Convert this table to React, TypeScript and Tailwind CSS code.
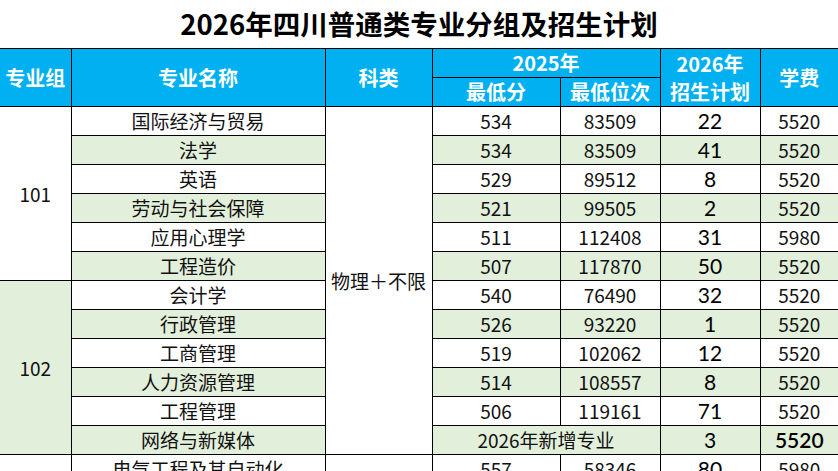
const groups = [
  {
    id: "101",
    bg: "bg-white",
    rows: [
      { name: "国际经济与贸易", min: "534", rank: "83509", plan: "22", fee: "5520" },
      { name: "法学", min: "534", rank: "83509", plan: "41", fee: "5520" },
      { name: "英语", min: "529", rank: "89512", plan: "8", fee: "5520" },
      { name: "劳动与社会保障", min: "521", rank: "99505", plan: "2", fee: "5520" },
      { name: "应用心理学", min: "511", rank: "112408", plan: "31", fee: "5980" },
      { name: "工程造价", min: "507", rank: "117870", plan: "50", fee: "5520" },
    ],
  },
  {
    id: "102",
    bg: "bg-[#e2efda]",
    rows: [
      { name: "会计学", min: "540", rank: "76490", plan: "32", fee: "5520" },
      { name: "行政管理", min: "526", rank: "93220", plan: "1", fee: "5520" },
      { name: "工商管理", min: "519", rank: "102062", plan: "12", fee: "5520" },
      { name: "人力资源管理", min: "514", rank: "108557", plan: "8", fee: "5520" },
      { name: "工程管理", min: "506", rank: "119161", plan: "71", fee: "5520" },
      { name: "网络与新媒体", min: "", rank: "", plan: "3", fee: "5520", isNew: true },
    ],
  },
  {
    id: "",
    bg: "bg-white",
    rows: [{ name: "电气工程及其自动化", min: "557", rank: "58346", plan: "80", fee: "5980" }],
  },
];

const cell = "border border-black text-center align-middle p-0";
const head = "border border-black text-center align-middle p-0 bg-[#00b0f0] text-white font-bold text-[20px] leading-[24px]";
const plan = "font-['Lato','Noto_Sans_CJK_SC',sans-serif] text-[21px] text-black";

export default function App() {
  let idx = 0;
  return (
    <div className="w-[838px] h-[471px] overflow-hidden bg-white font-['Noto_Sans_CJK_SC','Noto_Sans',sans-serif] text-[#111]">
      <h1 className="h-[48px] flex items-center justify-center text-[27.5px] font-bold text-black">
        2026年四川普通类专业分组及招生计划
      </h1>
      <table className="w-[838px] table-fixed border-collapse text-[19px] leading-[24px]">
        <colgroup>
          <col className="w-[71px]" />
          <col className="w-[254px]" />
          <col className="w-[107px]" />
          <col className="w-[128px]" />
          <col className="w-[100px]" />
          <col className="w-[100px]" />
          <col className="w-[78px]" />
        </colgroup>
        <thead>
          <tr className="h-[29px]">
            <th rowSpan={2} className={`${head} border-l-0`}>专业组</th>
            <th rowSpan={2} className={head}>专业名称</th>
            <th rowSpan={2} className={head}>科类</th>
            <th colSpan={2} className={head}>2025年</th>
            <th rowSpan={2} className={`${head} leading-[28px]`}>
              2026年
              <br />
              招生计划
            </th>
            <th rowSpan={2} className={`${head} border-r-0`}>学费</th>
          </tr>
          <tr className="h-[29px]">
            <th className={head}>最低分</th>
            <th className={head}>最低位次</th>
          </tr>
        </thead>
        <tbody>
          {groups.map((g, gi) =>
            g.rows.map((r, ri) => {
              const bg = idx++ % 2 === 0 ? "bg-white" : "bg-[#e2efda]";
              return (
                <tr key={`${gi}-${ri}`} className="h-[29px]">
                  {ri === 0 && (
                    <td rowSpan={g.rows.length} className={`${cell} border-l-0 ${g.bg}`}>
                      {g.id}
                    </td>
                  )}
                  <td className={`${cell} ${bg}`}>{r.name}</td>
                  {ri === 0 && gi === 0 && (
                    <td rowSpan={12} className={`${cell} bg-white`}>
                      物理＋不限
                    </td>
                  )}
                  {gi === 2 && <td className={`${cell} bg-white`}></td>}
                  {r.isNew ? (
                    <td colSpan={2} className={`${cell} ${bg}`}>2026年新增专业</td>
                  ) : (
                    <>
                      <td className={`${cell} ${bg}`}>{r.min}</td>
                      <td className={`${cell} ${bg}`}>{r.rank}</td>
                    </>
                  )}
                  <td className={`${cell} ${bg} ${plan}`}>{r.plan}</td>
                  <td className={`${cell} border-r-0 ${bg} ${r.isNew ? `${plan} font-semibold` : ""}`}>{r.fee}</td>
                </tr>
              );
            })
          )}
        </tbody>
      </table>
    </div>
  );
}
